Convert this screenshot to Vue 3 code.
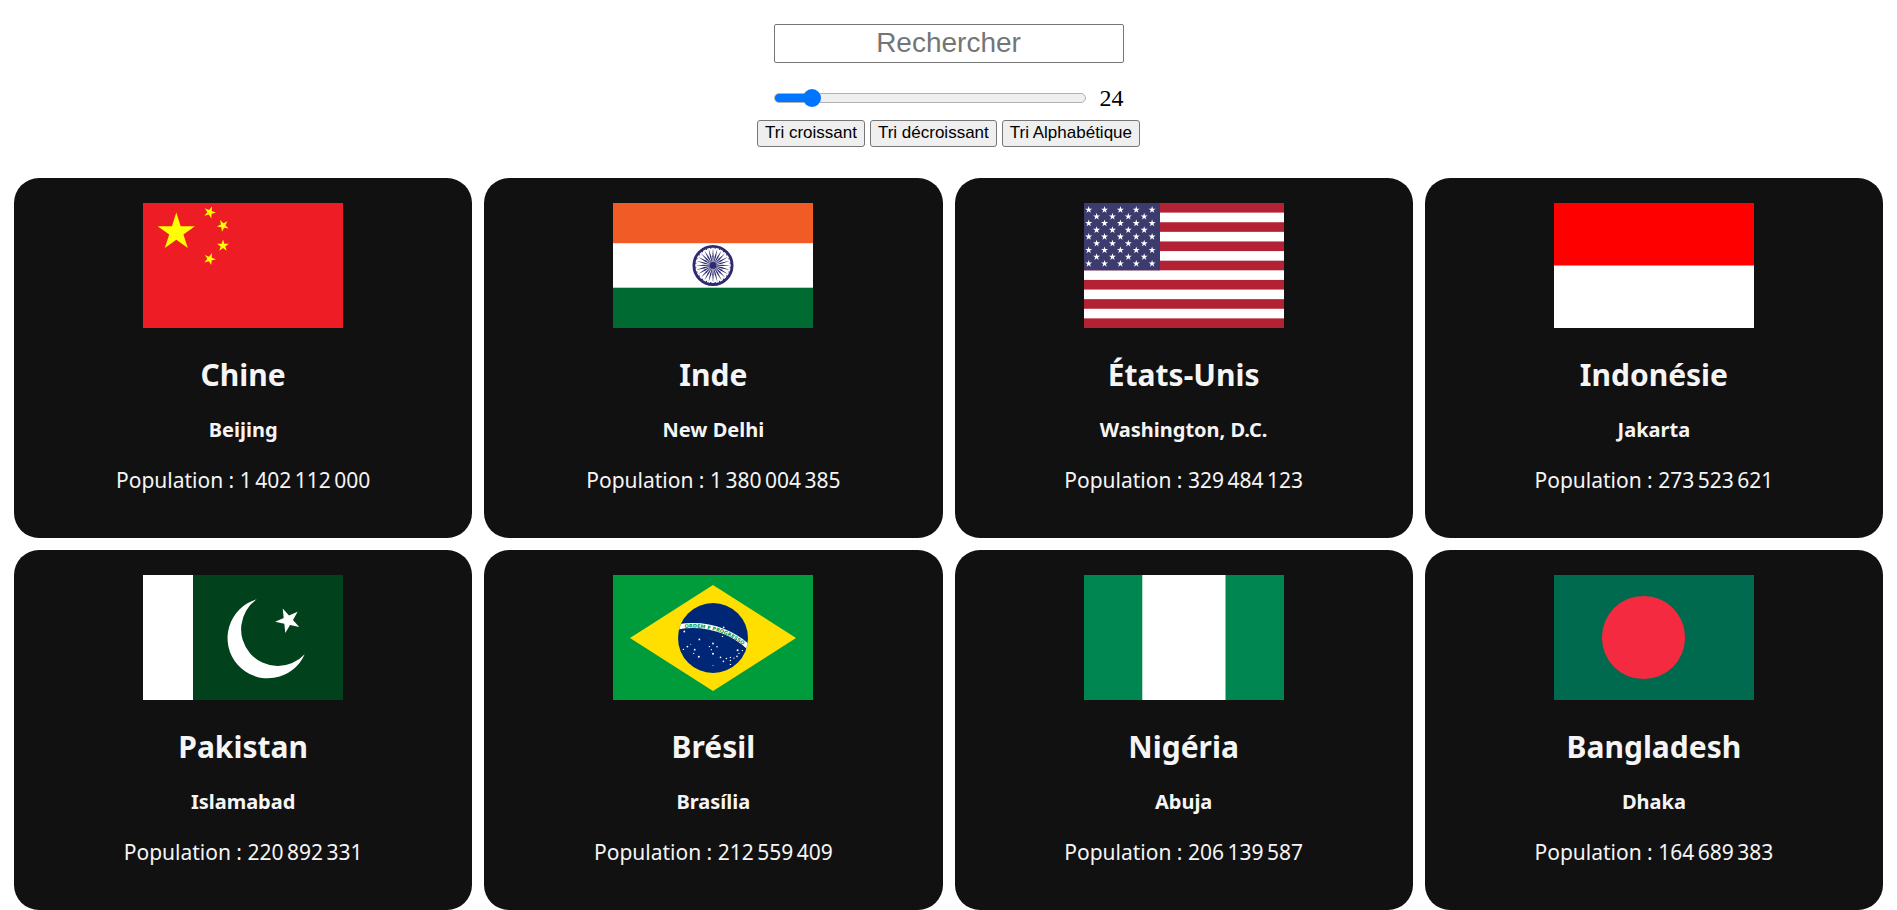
<script setup>
import { computed, ref } from 'vue'

const countries = [
  { code: 'cn', name: 'Chine', capital: 'Beijing', population: 1402112000 },
  { code: 'in', name: 'Inde', capital: 'New Delhi', population: 1380004385 },
  { code: 'us', name: 'États-Unis', capital: 'Washington, D.C.', population: 329484123 },
  { code: 'id', name: 'Indonésie', capital: 'Jakarta', population: 273523621 },
  { code: 'pk', name: 'Pakistan', capital: 'Islamabad', population: 220892331 },
  { code: 'br', name: 'Brésil', capital: 'Brasília', population: 212559409 },
  { code: 'ng', name: 'Nigéria', capital: 'Abuja', population: 206139587 },
  { code: 'bd', name: 'Bangladesh', capital: 'Dhaka', population: 164689383 }
]

const MAX = 250
const search = ref('')
const limit = ref(24)
const sortMode = ref('desc')

const sorters = {
  asc: (a, b) => a.population - b.population,
  desc: (a, b) => b.population - a.population,
  alpha: (a, b) => a.name.localeCompare(b.name, 'fr')
}

const visible = computed(() =>
  countries
    .filter((c) => c.name.toLowerCase().includes(search.value.toLowerCase()))
    .sort(sorters[sortMode.value])
    .slice(0, limit.value)
)

const ratio = computed(() => limit.value / MAX)

const formatNumber = (n) => String(n).replace(/\B(?=(\d{3})+$)/g, '\u202f')

// Five-pointed star centred on (cx, cy), turned clockwise by `turn` degrees.
function star(cx, cy, r, turn = 0) {
  return Array.from({ length: 10 }, (_, i) => {
    const radius = i % 2 ? r * 0.382 : r
    const a = ((i * 36 + turn - 90) * Math.PI) / 180
    return `${(cx + radius * Math.cos(a)).toFixed(2)},${(cy + radius * Math.sin(a)).toFixed(2)}`
  }).join(' ')
}

const chinaStars = [
  star(33.3, 29.2, 19.6),
  star(66.7, 9.3, 6.3, 21),
  star(80, 22.6, 6.3, -27),
  star(80, 42.7, 6.3),
  star(66.7, 56, 6.3, 21)
]

const usStars = []
for (let row = 0; row < 9; row++) {
  const odd = row % 2
  for (let col = 0; col < (odd ? 4 : 5); col++) {
    usStars.push(star(4.7 + col * 15.85 + odd * 7.92, 6.8 + row * 6.73, 3.7))
  }
}

const usStripes = Array.from({ length: 7 }, (_, i) => (i * 2 * 125) / 13)
const spokes = Array.from({ length: 24 }, (_, i) => i * 15)

const brazilStars = [
  [71.3, 56.5, 0.9], [86.4, 64.4, 0.9], [74.4, 71.6, 0.9], [70.4, 74.4, 0.7], [77.7, 69.3, 0.5],
  [81.7, 74.7, 0.9], [80.7, 78.4, 0.6], [85.8, 81.7, 1], [100, 68.5, 0.9], [96.4, 71.6, 0.7],
  [104, 71.7, 0.8], [98.4, 74.7, 0.6], [100, 78.7, 1], [110.7, 52.4, 0.8], [109.5, 61.4, 0.7],
  [124.6, 75.2, 1], [129.4, 75.6, 0.7], [126, 78.4, 0.7], [124, 81.4, 0.8], [121, 83.1, 0.7],
  [117.4, 82.4, 0.7], [117.4, 85.5, 0.7], [117.4, 89.4, 0.7], [113.4, 83.5, 0.8],
  [107.5, 82.4, 0.8], [110.4, 86.4, 0.8], [100, 90.5, 0.5]
]
</script>

<template>
  <main class="countries">
    <form class="controls" @submit.prevent>
      <input v-model="search" class="search" type="text" placeholder="Rechercher" aria-label="Rechercher" />
      <div class="range-row">
        <input
          id="limit"
          v-model.number="limit"
          class="range"
          type="range"
          min="0"
          :max="MAX"
          aria-label="Nombre de pays"
          :style="{ '--ratio': ratio }"
        />
        <output for="limit">{{ limit }}</output>
      </div>
      <div class="sorts">
        <button type="button" @click="sortMode = 'asc'">Tri croissant</button>
        <button type="button" @click="sortMode = 'desc'">Tri décroissant</button>
        <button type="button" @click="sortMode = 'alpha'">Tri Alphabétique</button>
      </div>
    </form>

    <ul class="grid">
      <li v-for="c in visible" :key="c.code" class="card">
        <svg class="flag" viewBox="0 0 200 125" role="img" :aria-label="c.name">
          <g v-if="c.code === 'cn'">
            <rect width="200" height="125" fill="#ee1c25" />
            <polygon v-for="p in chinaStars" :key="p" :points="p" fill="#ff0" />
          </g>
          <g v-else-if="c.code === 'in'">
            <rect width="200" height="125" fill="#fff" />
            <rect width="200" height="40.2" fill="#f15b25" />
            <rect y="84.7" width="200" height="40.3" fill="#006a33" />
            <g transform="translate(100 62.4)" fill="#2d2a70">
              <circle r="19.1" fill="none" stroke="#2d2a70" stroke-width="2.8" />
              <path v-for="a in spokes" :key="a" d="M0-17.5L.7-9 0 0-.7-9z" :transform="`rotate(${a})`" />
              <circle v-for="a in spokes" :key="'d' + a" cy="-17.4" r=".7" :transform="`rotate(${a + 7.5})`" />
              <circle r="3.4" />
            </g>
          </g>
          <g v-else-if="c.code === 'us'">
            <rect width="200" height="125" fill="#fff" />
            <rect v-for="y in usStripes" :key="y" :y="y" width="200" height="9.615" fill="#b22234" />
            <rect width="76" height="67.3" fill="#3c3b6e" />
            <polygon v-for="p in usStars" :key="p" :points="p" fill="#fff" />
          </g>
          <g v-else-if="c.code === 'id'">
            <rect width="200" height="125" fill="#fff" />
            <rect width="200" height="62.5" fill="#f00" />
          </g>
          <g v-else-if="c.code === 'pk'">
            <rect width="200" height="125" fill="#01411c" />
            <rect width="50" height="125" fill="#fff" />
            <path d="M113.7 24.3A40.3 40.3 0 1 0 161.7 79.3A36.7 36.7 0 1 1 113.7 24.3z" fill="#fff" />
            <polygon :points="star(145, 45.4, 13, -24)" fill="#fff" />
          </g>
          <g v-else-if="c.code === 'br'">
            <clipPath id="globe"><circle cx="100" cy="63" r="35" /></clipPath>
            <rect width="200" height="125" fill="#009c3b" />
            <path d="M17 63L100 10l83 53-83 53z" fill="#ffdf00" />
            <circle cx="100" cy="63" r="35" fill="#002776" />
            <circle cx="80" cy="133" r="82.5" fill="none" stroke="#fff" stroke-width="5" clip-path="url(#globe)" />
            <path id="motto-arc" d="M66.7 53.7A80.5 80.5 0 0 1 137 76.5" fill="none" />
            <text class="motto">
              <textPath href="#motto-arc" startOffset="47%" text-anchor="middle">ORDEM E PROGRESSO</textPath>
            </text>
            <circle v-for="[x, y, r] in brazilStars" :key="`${x}-${y}`" :cx="x" :cy="y" :r="r" fill="#fff" />
          </g>
          <g v-else-if="c.code === 'ng'">
            <rect width="200" height="125" fill="#008751" />
            <rect x="58.3" width="83.2" height="125" fill="#fff" />
          </g>
          <g v-else>
            <rect width="200" height="125" fill="#006a4e" />
            <circle cx="89.5" cy="62.5" r="41.6" fill="#f42a41" />
          </g>
        </svg>
        <h2>{{ c.name }}</h2>
        <h4>{{ c.capital }}</h4>
        <p>Population : {{ formatNumber(c.population) }}</p>
      </li>
    </ul>
  </main>
</template>

<style>
html {
  background: #fff;
}
</style>

<style scoped>
.countries {
  box-sizing: border-box;
  height: 100vh;
  padding: 24px 14px 12px;
  overflow-y: auto;
  scrollbar-width: none;
  font-family: "Liberation Serif", "Times New Roman", serif;
}

.controls {
  display: flex;
  flex-direction: column;
  align-items: center;
}

.search {
  box-sizing: border-box;
  width: 350px;
  max-width: 100%;
  height: 39px;
  padding: 0 4px 2px;
  border: 1px solid #767676;
  border-radius: 2px;
  background: #fff;
  font: 28px/34px "Liberation Sans", Arial, sans-serif;
  text-align: center;
}

.search::placeholder {
  color: #757575;
}

.range-row {
  display: flex;
  align-items: center;
  justify-content: space-between;
  width: 350px;
  max-width: 100%;
  margin-top: 20px;
  font-size: 24px;
  line-height: 30px;
}

.range {
  --fill: calc(9px + var(--ratio) * (100% - 18px));
  appearance: none;
  box-sizing: border-box;
  width: 312px;
  height: 18px;
  margin: 0;
  background: transparent;
}

.range::-webkit-slider-runnable-track {
  box-sizing: border-box;
  height: 10px;
  border: 1px solid #b2b2b2;
  border-radius: 5px;
  background:
    linear-gradient(90deg, #0075ff var(--fill), transparent var(--fill)) border-box,
    #efefef;
}

.range::-webkit-slider-thumb {
  appearance: none;
  width: 18px;
  height: 18px;
  margin-top: -5px;
  border-radius: 50%;
  background: #0075ff;
}

.sorts {
  display: flex;
  flex-wrap: wrap;
  justify-content: center;
  gap: 5px;
  margin-top: 7px;
}

.sorts button {
  box-sizing: border-box;
  height: 27px;
  padding: 0 7px 2px;
  border: 1px solid #767676;
  border-radius: 3px;
  background: #efefef;
  color: #000;
  font: 17px/24px "Liberation Sans", Arial, sans-serif;
}

.grid {
  display: grid;
  grid-template-columns: repeat(4, 1fr);
  gap: 12px;
  margin: 31px 0 0;
  padding: 0;
  list-style: none;
}

.card {
  display: flex;
  flex-direction: column;
  align-items: center;
  padding: 25px 20px 44px;
  border-radius: 25px;
  background: #111;
  color: #f5f5f5;
  font-family: "Noto Sans", "Open Sans", sans-serif;
  text-align: center;
}

.flag {
  display: block;
  width: 200px;
  height: 125px;
}

.motto {
  font: bold 5px "DejaVu Sans", sans-serif;
  fill: #009c3b;
}

h2 {
  margin: 27px 0 0;
  font-size: 30px;
  line-height: 40px;
}

h4 {
  margin: 21px 0 0;
  font-size: 20px;
  line-height: 28px;
}

p {
  margin: 22px 0 0;
  font-size: 21px;
  line-height: 28px;
}

@media (max-width: 1300px) {
  .grid {
    grid-template-columns: repeat(2, 1fr);
  }
}

@media (max-width: 700px) {
  .grid {
    grid-template-columns: 1fr;
  }
}
</style>
